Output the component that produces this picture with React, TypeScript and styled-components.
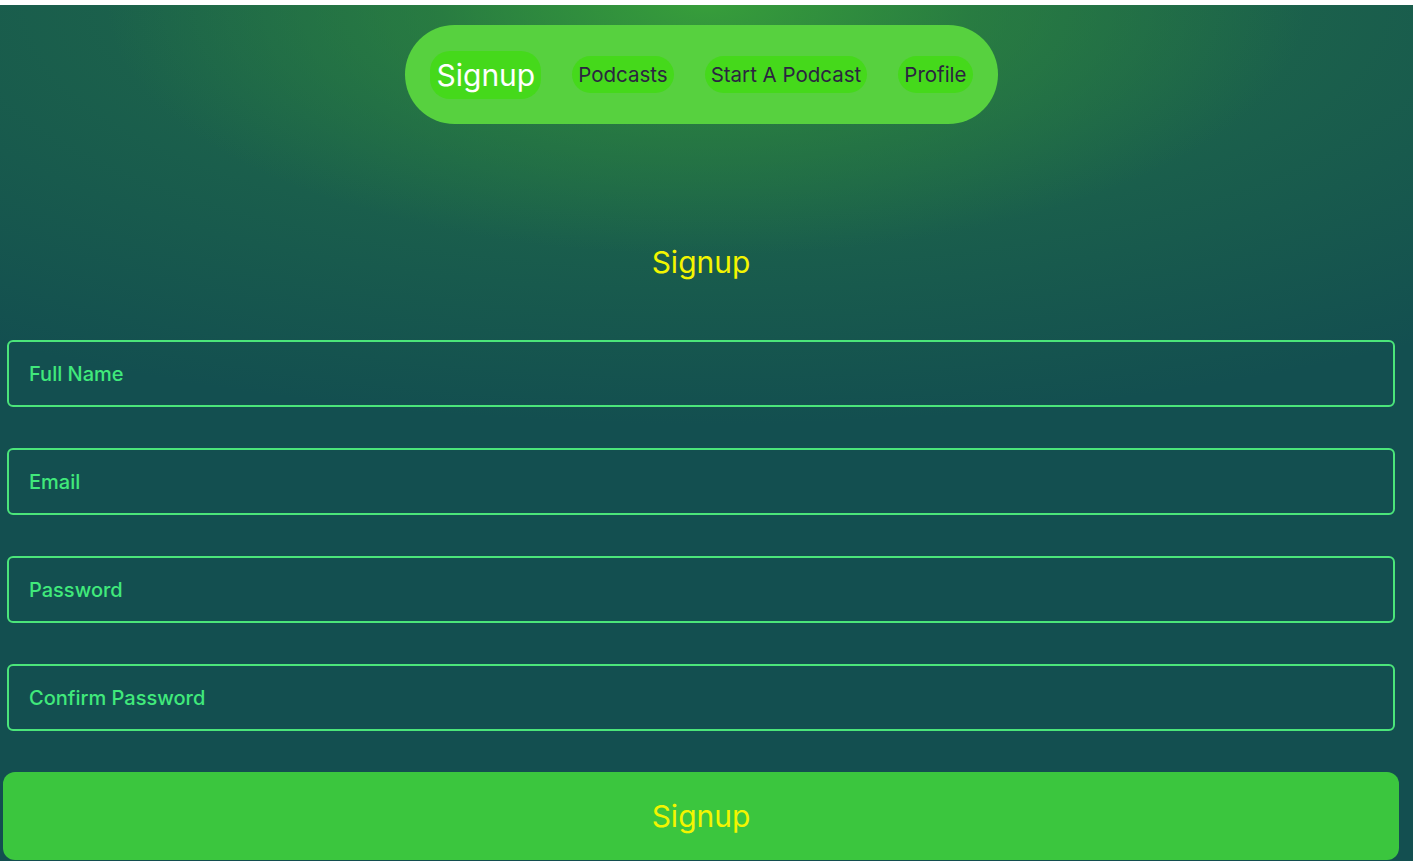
import React from 'react';
import styled, { createGlobalStyle } from 'styled-components';

const GlobalStyle = createGlobalStyle`
  body {
    margin: 0;
    background: #ffffff;
    font-family: Inter, "Noto Sans", sans-serif;
  }
  * { box-sizing: border-box; }
`;

const Page = styled.div`
  margin-top: 5px;
  min-height: 856px;
  padding: 20px 11px 0 0;
  background:
    radial-gradient(ellipse 600px 250px at 50% 0, rgba(56, 160, 58, 0.95) 0%, rgba(46, 135, 60, 0.6) 45%, rgba(19, 79, 80, 0) 100%),
    radial-gradient(ellipse 1200px 420px at 50% 0, rgba(40, 125, 68, 0.75) 0%, rgba(19, 79, 80, 0) 100%),
    #134f50;
`;

const NavBar = styled.nav`
  display: flex;
  align-items: center;
  justify-content: center;
  gap: 31px;
  width: 593px;
  height: 99px;
  margin: 0 auto;
  padding: 0 25px 0 26px;
  border-radius: 50px;
  background: #57d13f;
`;

const NavLink = styled.a<{ $active?: boolean }>`
  display: flex;
  align-items: center;
  padding: 0 6px;
  height: ${(p) => (p.$active ? '48px' : '37px')};
  border-radius: 20px;
  background: #45d91b;
  color: ${(p) => (p.$active ? '#ffffff' : '#2b2540')};
  font-size: ${(p) => (p.$active ? '30px' : '20.5px')};
  text-decoration: none;
  cursor: pointer;
  white-space: nowrap;
`;

const Title = styled.h1`
  margin: 119px 0 0;
  text-align: center;
  color: #f3f500;
  font-size: 30px;
  font-weight: 400;
  line-height: 38px;
`;

const Form = styled.form`
  display: flex;
  flex-direction: column;
  gap: 41px;
  margin-top: 59px;
`;

const Input = styled.input`
  display: block;
  width: calc(100% - 14px);
  height: 67px;
  margin: 0 7px;
  padding: 0 20px;
  border: 2px solid #4be57a;
  border-radius: 6px;
  background: transparent;
  color: #40e97b;
  font-family: Inter, "Noto Sans", sans-serif;
  font-size: 20px;
  font-weight: 500;
  outline: none;

  &::placeholder {
    color: #40e97b;
    opacity: 1;
  }
`;

const SubmitButton = styled.button`
  display: block;
  width: calc(100% - 6px);
  height: 88px;
  margin: 0 3px;
  border: none;
  border-radius: 12px;
  background: #3bc63e;
  color: #f3f500;
  font-family: Inter, "Noto Sans", sans-serif;
  font-size: 30px;
  cursor: pointer;
`;

const fields = ['Full Name', 'Email', 'Password', 'Confirm Password'];

export default function App() {
  return (
    <>
      <GlobalStyle />
      <Page>
        <NavBar>
          <NavLink $active>Signup</NavLink>
          <NavLink>Podcasts</NavLink>
          <NavLink>Start A Podcast</NavLink>
          <NavLink>Profile</NavLink>
        </NavBar>
        <Title>Signup</Title>
        <Form onSubmit={(e) => e.preventDefault()}>
          {fields.map((f) => (
            <Input
              key={f}
              type={f.includes('Password') ? 'password' : 'text'}
              placeholder={f}
            />
          ))}
          <SubmitButton type="submit">Signup</SubmitButton>
        </Form>
      </Page>
    </>
  );
}
